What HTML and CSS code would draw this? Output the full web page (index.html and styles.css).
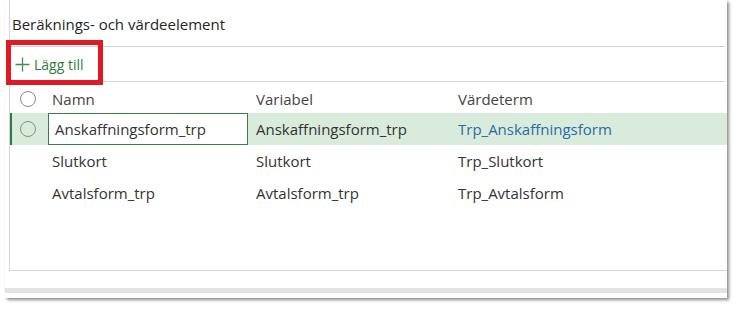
FILE: index.html
```html
<!DOCTYPE html>
<html lang="sv">
<head>
    <meta charset="UTF-8">
    <title>Beräknings- och värdeelement</title>
    <link rel="stylesheet" href="styles.css">
</head>
<body>
    <div class="shot">
        <section class="panel">
            <h2 class="panel-title">Beräknings- och värdeelement</h2>
            <div class="toolbar">
                <button class="add-button">
                    <svg width="15" height="15" viewBox="0 0 15 15"><path d="M7.5 0.5v14M0.5 7.5h14" stroke="#3f8f4c" stroke-width="1.3" fill="none"/></svg>
                    <span>Lägg till</span>
                </button>
            </div>
            <div class="grid">
                <div class="row head">
                    <div class="cell radio-cell"><span class="radio"></span></div>
                    <div class="cell name">Namn</div>
                    <div class="cell">Variabel</div>
                    <div class="cell">Värdeterm</div>
                </div>
                <div class="row selected">
                    <div class="cell radio-cell"><span class="radio"></span></div>
                    <div class="cell name"><span class="edit">Anskaffningsform_trp</span></div>
                    <div class="cell">Anskaffningsform_trp</div>
                    <div class="cell link">Trp_Anskaffningsform</div>
                </div>
                <div class="row">
                    <div class="cell radio-cell"></div>
                    <div class="cell name">Slutkort</div>
                    <div class="cell">Slutkort</div>
                    <div class="cell">Trp_Slutkort</div>
                </div>
                <div class="row">
                    <div class="cell radio-cell"></div>
                    <div class="cell name">Avtalsform_trp</div>
                    <div class="cell">Avtalsform_trp</div>
                    <div class="cell">Trp_Avtalsform</div>
                </div>
            </div>
        </section>
        <div class="band"></div>
        <div class="highlight"></div>
    </div>
</body>
</html>
```

FILE: styles.css
```css
/* Reset */
body, h2 {
    margin: 0;
    padding: 0;
}

body {
    font-family: "Open Sans", "Noto Sans", sans-serif;
    background-color: #fff;
    color: #333;
    width: 736px;
    height: 310px;
    overflow: hidden;
}

/* Outer screenshot card */
.shot {
    position: relative;
    margin-left: 5px;
    width: 722px;
    height: 298px;
    background-color: #fff;
    box-shadow: 2px 2px 3px rgba(0, 0, 0, 0.45);
    overflow: hidden;
}

.panel {
    margin-left: 4px;
    width: 740px;
    height: 270px;
    border-left: 1px solid #d6d6d6;
    border-bottom: 1px solid #d6d6d6;
}

.panel-title {
    height: 47px;
    padding-left: 2px;
    padding-top: 2px;
    display: flex;
    align-items: center;
    box-sizing: border-box;
    font-size: 15px;
    font-weight: normal;
    color: #262626;
    border-bottom: 1px solid #d0d0d0;
    width: 715px;
}

/* Toolbar */
.toolbar {
    height: 34px;
    width: 715px;
    display: flex;
    align-items: center;
    border-bottom: 1px solid #d8d8d8;
}

.add-button {
    display: flex;
    align-items: center;
    gap: 4px;
    padding: 0 0 0 5px;
    border: none;
    background: none;
    font-family: inherit;
    font-size: 14px;
    color: #2f7d3c;
}

/* Grid */
.row {
    display: grid;
    grid-template-columns: 38px 200px 202px 1fr;
    height: 32px;
    align-items: center;
    font-size: 15px;
}

.row.head {
    height: 31px;
    padding-top: 2px;
    box-sizing: border-box;
    color: #444;
}

.cell {
    padding-left: 8px;
    white-space: nowrap;
}

.cell.name {
    padding-left: 4px;
}

.radio-cell {
    padding-left: 10px;
    display: flex;
    align-items: center;
}

.radio {
    width: 16px;
    height: 16px;
    border: 1px solid #8a8a8a;
    border-radius: 50%;
    box-sizing: border-box;
}

.row.selected {
    background-color: #d9ecdc;
    box-shadow: inset 2px 0 0 #2d7a3d;
}

.row.selected .radio {
    border-color: #7c957f;
}

.row.selected .cell.name {
    padding-left: 0;
    align-self: stretch;
    display: flex;
}

.edit {
    flex: 1;
    display: flex;
    align-items: center;
    padding-left: 6px;
    background-color: #fff;
    border: 1px solid #3b7a4a;
}

.link {
    color: #2b6aa8;
}

/* Bottom of the screenshot */
.band {
    margin-top: 17px;
    height: 5px;
    background-color: #e3e3e3;
}

/* Red annotation frame */
.highlight {
    position: absolute;
    left: 1px;
    top: 40px;
    width: 87px;
    height: 35px;
    border: 5px solid #e01a24;
}
```
